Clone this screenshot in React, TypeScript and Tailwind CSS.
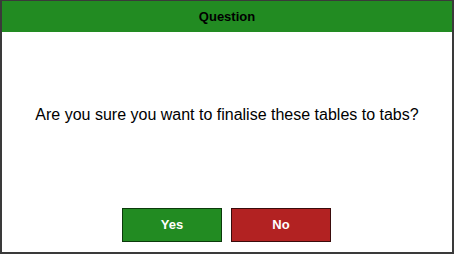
import React from 'react';

const App: React.FC = () => {
  return (
    <div
      className="w-[454px] h-[254px] flex flex-col bg-white border-[#3a3a3a] border-t border-l-2 border-r-2 border-b-2"
      style={{ fontFamily: '"Liberation Sans", Arial, sans-serif' }}
    >
      <div className="h-[31px] bg-[#228b22] flex items-center justify-center">
        <span className="text-[13px] font-bold text-black">Question</span>
      </div>
      <div className="flex-1 flex items-center justify-center pb-[10px]">
        <p className="text-[16px] text-black">Are you sure you want to finalise these tables to tabs?</p>
      </div>
      <div className="flex justify-center gap-[9px] pb-[10px] pr-[1px]">
        <button className="w-[100px] h-[34px] bg-[#228b22] border border-[#0c3a0c] text-white text-[13px] font-bold">
          Yes
        </button>
        <button className="w-[100px] h-[34px] bg-[#b22222] border border-[#3a0c0c] text-white text-[13px] font-bold">
          No
        </button>
      </div>
    </div>
  );
};

export default App;
